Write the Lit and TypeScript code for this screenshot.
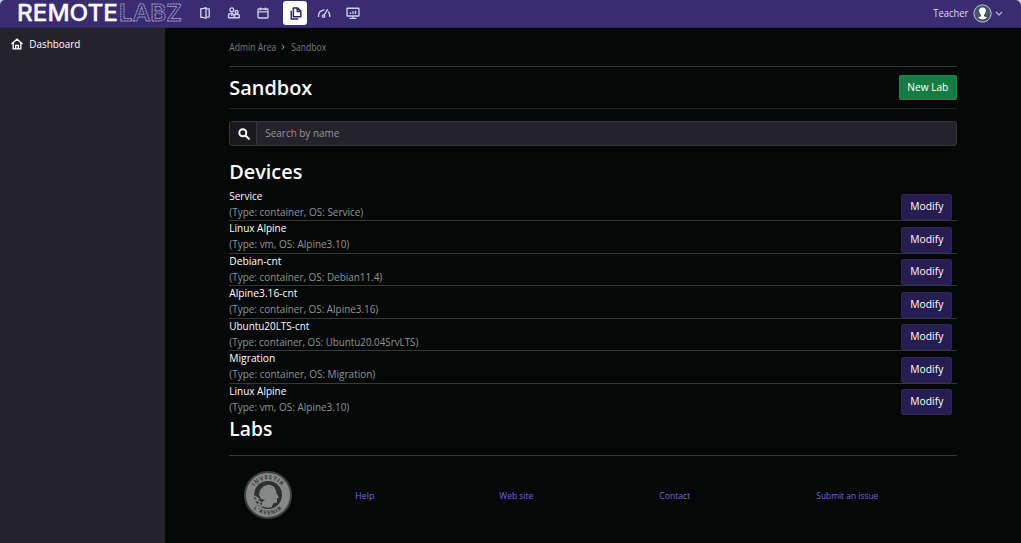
import { LitElement, html, svg, css } from "lit";
import { customElement } from "lit/decorators.js";

const devices = [
  ["Service", "(Type: container, OS: Service)", 33, 134],
  ["Linux Alpine", "(Type: vm, OS: Alpine3.10)", 57, 120],
  ["Debian-cnt", "(Type: container, OS: Debian11.4)", 52, 153],
  ["Alpine3.16-cnt", "(Type: container, OS: Alpine3.16)", 68, 149],
  ["Ubuntu20LTS-cnt", "(Type: container, OS: Ubuntu20.04SrvLTS)", 80, 189],
  ["Migration", "(Type: container, OS: Migration)", 46, 146],
  ["Linux Alpine", "(Type: vm, OS: Alpine3.10)", 57, 120],
] as const;

const icons = [
  svg`<path d="M8 1.6L5 2.6H2.8v8.8H5l3 1zM8 2.9h3.2v8.2H8"/>`,
  svg`<circle cx="4.8" cy="3.8" r="1.9"/><path d="M1.5 11.7V9.5Q1.5 7.3 4 7.3h1.3l1.8 2V11.7zM4.8 8v2"/><circle cx="9.6" cy="6" r="1.5"/><path d="M7.5 11.7V10q0-1.8 2-1.8h.8q2 0 2 1.8v1.7z"/>`,
  svg`<rect x="2" y="3" width="10" height="9" rx=".8"/><path d="M2 5.8h10M4.5 1.5v2.8M9.5 1.5v2.8"/>`,
  svg`<path d="M5 1.8h4l3 3V10H5zM8.6 2v3.2H12M3 4.5v7.7h6.5"/>`,
  svg`<path d="M1.5 11q-.5-6.5 6-7.2M11.3 5.5q1.6 2 1.4 5.5M10.8 3.2L7 9.2"/><circle cx="6.6" cy="10" r="1.2"/>`,
  svg`<rect x="1" y="2.2" width="12" height="7.8" rx=".5"/><path d="M7 10v2M3.5 12.3h7M4.5 8V6.2M7 8V5.3M9.5 8V4.7"/>`,
];

@customElement("app-root")
export class AppRoot extends LitElement {
  static styles = css`
    * { box-sizing: border-box; }
    :host { display: flex; flex-direction: column; height: 543px; overflow: hidden; background: #050807; color: #fff; font: 11px/16px "Open Sans", "Noto Sans", sans-serif; }
    svg { display: block; flex: none; }
    .bar { display: flex; align-items: flex-start; height: 28px; background: linear-gradient(#392c70 0 27px, #30255d 27px); border-radius: 5px 6px 0 0; }
    .corners { background: #b9d6df; flex: none; }
    .logo { margin-left: 16px; }
    .remote { font: 500 23px "Inter", sans-serif; fill: #fff; stroke: #fff; stroke-width: .3; }
    .labz { font: 600 23px "Inter", sans-serif; fill: none; stroke: #a7a0ce; stroke-width: .9; stroke-dasharray: 2 .6; }
    .nav { display: flex; gap: 5px; margin: 1px 0 0 10px; }
    .tab { display: grid; place-items: center; width: 24px; height: 24px; border-radius: 3px; color: #d2cdec; }
    .tab.on { background: #fff; color: #2d225c; margin: 0 0 0 3px; }
    .tab svg { fill: none; stroke: currentColor; stroke-width: 1.35; stroke-linejoin: round; }
    .user { display: flex; align-items: center; height: 26px; margin: 0 18px 0 auto; color: #dedaf1; }
    .avatar { margin-left: 5px; }
    .caret { margin-left: 3px; }
    .body { display: flex; flex: 1; min-height: 0; }
    .side { width: 165px; flex: none; background: #242329; padding: 8px 0 0 11px; }
    .dash { display: flex; align-items: center; gap: 5.5px; height: 16px; }
    .main { width: 728px; margin-left: 64px; }
    .crumb { display: flex; height: 39px; padding-top: 11px; border-bottom: 1px solid #34373b; color: #777b7e; }
    .head { display: flex; justify-content: space-between; align-items: center; height: 42px; border-bottom: 1px solid #1d2728; }
    .new { display: flex; justify-content: center; padding: 3px 1px 0 0; width: 58px; height: 25px; background: #157d43; border: 1px solid #198d4b; border-radius: 2px; }
    .search { display: flex; height: 25px; margin-top: 12px; border: 1px solid #35363b; border-radius: 3px; background: #242329; overflow: hidden; }
    .glass { width: 27px; background: #1a191d; border-right: 1px solid #35363b; display: grid; place-items: center; padding-left: 1px; }
    .hint { padding: 3px 7.5px; color: #96979b; }
    .devices { margin-top: 12px; height: 30px; }
    .row { display: flex; justify-content: space-between; height: 32px; }
    .row:nth-child(even) { height: 33px; }
    .row + .row { box-shadow: inset 0 1px #34373b; }
    .name, .type { display: block; height: 16px; }
    .type { color: #919497; }
    .modify { display: flex; justify-content: center; padding: 3px 1px 0 0; width: 51px; height: 26px; margin: 6px 5px 0 0; background: #281d50; border: 1px solid #30245e; border-radius: 2px; flex: none; position: relative; z-index: 1; }
    .row:nth-child(even) .modify { margin-top: 7px; }
    .labs { height: 41px; border-bottom: 1px solid #34373b; }
    .foot { display: flex; align-items: center; height: 78px; padding-left: 14px; color: #7466e6; }
    .seal { margin-right: 61.5px; }
    .letters { font: 700 5.6px "Open Sans", sans-serif; fill: #343736; letter-spacing: .9px; }
    .fit { display: block; overflow: visible; }
    .fit text { fill: currentColor; }
    .gap { width: 125.8px; }
    .f9 { font-size: 9px; } .f10 { font-size: 10px; } .f11 { font-size: 11px; } .f20 { font-size: 20px; font-weight: 600; }
  `;

  label(text: string, width: number, size = 11) {
    const h = size === 20 ? 27 : 16;
    const y = size === 20 ? 21 : 12;
    return html`<svg class="fit f${size}" width=${width} height=${h}><text x="0.3" y=${y} textLength=${width} lengthAdjust="spacingAndGlyphs">${text}</text></svg>`;
  }

  render() {
    return html`
      <div class="corners"><header class="bar">
        <svg class="logo" width="167" height="27"><text class="remote" x="1" y="21" textLength="101" lengthAdjust="spacingAndGlyphs">REMOTE</text><text class="labz" x="103" y="21" textLength="63" lengthAdjust="spacingAndGlyphs">LABZ</text></svg>
        <nav class="nav">${icons.map((g, i) => html`<span class="tab ${i === 3 ? "on" : ""}"><svg width=${i === 3 ? 15 : 14} height=${i === 3 ? 15 : 14} viewBox="0 0 14 14">${g}</svg></span>`)}</nav>
        <div class="user">${this.label("Teacher", 35)}
          <svg class="avatar" width="19" height="19" viewBox="0 0 19 19"><circle cx="9.5" cy="9.5" r="8.6" fill="#455661" stroke="#c8c8df"/><path d="M9.5 3.4c-5 0-3.4 5.8-1.5 7.3v1.5l-3 1.3q4.5 4 9 0l-3-1.3v-1.5c2-1.5 3.5-7.3-1.5-7.3" fill="#fff"/></svg>
          <svg class="caret" width="8" height="7" fill="none" stroke="#c5bfdf" stroke-width="1.1"><path d="M1 2l3 3 3-3"/></svg>
        </div>
      </header></div>
      <div class="body">
        <aside class="side"><div class="dash">
          <svg width="12" height="12" viewBox="0 0 12 12" fill="none" stroke="#fff" stroke-width="1.3"><path d="M.5 6L6 1.2 11.5 6M2.2 5v5.8h7.6V5M4.7 10.5V7.3h2.6v3.2"/></svg>${this.label("Dashboard", 51)}
        </div></aside>
        <main class="main">
          <div class="crumb">${this.label("Admin Area", 47, 10)}<svg width="15" height="16" fill="none" stroke="#a0a2a4"><path d="M6 5.5l2 2.5-2 2.5"/></svg>${this.label("Sandbox", 35, 10)}</div>
          <div class="head">${this.label("Sandbox", 83, 20)}<span class="new">${this.label("New Lab", 41)}</span></div>
          <div class="search"><span class="glass"><svg width="12" height="12" fill="none" stroke="#fff" stroke-width="2"><circle cx="4.8" cy="4.8" r="3.5"/><path d="M7.5 7.5l4 4"/></svg></span><span class="hint">${this.label("Search by name", 74)}</span></div>
          <div class="devices">${this.label("Devices", 73, 20)}</div>
          <div>${devices.map(([n, t, nw, tw]) => html`<div class="row"><div><span class="name">${this.label(n, nw)}</span><span class="type">${this.label(t, tw)}</span></div><span class="modify">${this.label("Modify", 33)}</span></div>`)}</div>
          <div class="labs">${this.label("Labs", 43, 20)}</div>
          <footer class="foot">
            <svg class="seal" width="50" height="50" viewBox="0 0 50 50"><circle cx="25" cy="25" r="23" fill="#858886" stroke="#3b3f3d" stroke-width="2"/><circle cx="25" cy="25" r="14" fill="#2c302e"/>
              <path d="M19 36v-4l3-2-4-1-2-4 1-5 4-4 5-1.5 5 2 2 4 .5 3 2.5 4-2 1v4l-4 1-1 3.5q-5 2-10-1" fill="#858886"/><path d="M11.5 26l4 3-3 1 5 2-2 2 4 3" stroke="#858886" stroke-width="1.6" fill="none"/>
              <path id="top" d="M8.8 23A16.4 16.4 0 0 1 41.2 23" fill="none"/><path id="bottom" d="M4.8 27A20.4 20.4 0 0 0 45.2 27" fill="none"/>
              <text class="letters"><textPath href="#top" startOffset="50%" text-anchor="middle">INVESTIR</textPath></text><text class="letters"><textPath href="#bottom" startOffset="50%" text-anchor="middle">L'AVENIR</textPath></text></svg>
            ${this.label("Help", 19, 9)}<span class="gap"></span>${this.label("Web site", 34, 9)}<span class="gap"></span>${this.label("Contact", 31, 9)}<span class="gap"></span>${this.label("Submit an issue", 62, 9)}
          </footer>
        </main>
      </div>`;
  }
}
